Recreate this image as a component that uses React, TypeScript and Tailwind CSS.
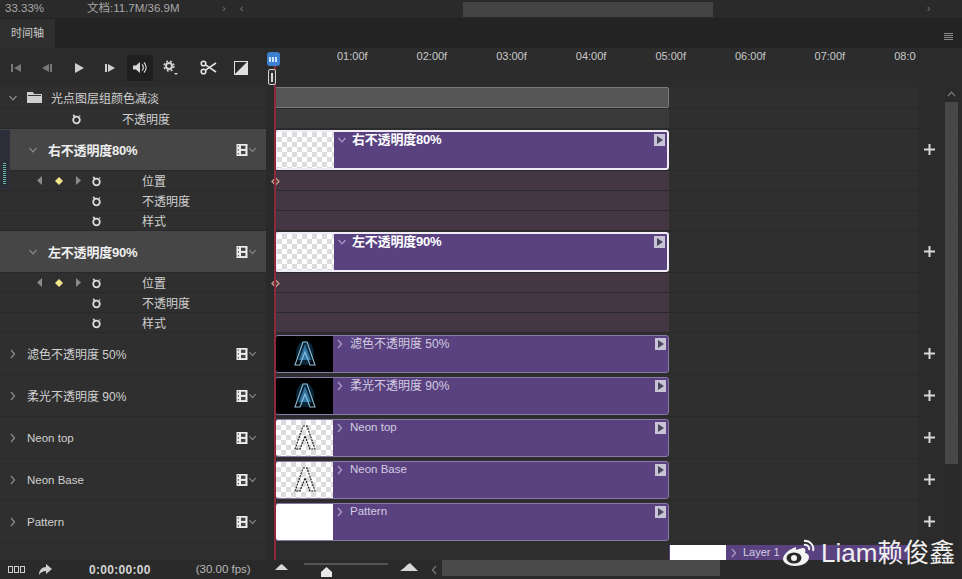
import React from "react";

const font = { fontFamily: '"Liberation Sans","Noto Sans CJK SC",sans-serif' };

function Stopwatch() {
  return (
    <svg width="11" height="12" viewBox="0 0 11 12" fill="none" stroke="#dcdcdc" strokeWidth="1.8">
      <circle cx="5.5" cy="7" r="3.3" />
      <path d="M2.200 2 3.800 3.600" />
      <path d="M8.300 3.400 9.200 2.500" strokeWidth="1.200" />
    </svg>
  );
}

function Film() {
  return (
    <svg width="12" height="13" viewBox="0 0 12 13">
      <rect x="0.500" y="0.500" width="11" height="12" fill="#ececec" />
      <rect x="1.800" y="2" width="1.200" height="1.200" fill="#444" />
      <rect x="1.800" y="5.800" width="1.200" height="1.200" fill="#444" />
      <rect x="1.800" y="9.600" width="1.200" height="1.200" fill="#444" />
      <rect x="5" y="2.200" width="4.400" height="3.200" fill="#444" />
      <rect x="5" y="7.400" width="4.400" height="3.200" fill="#444" />
    </svg>
  );
}

function ChevDown({ c = "#8a8a8a", s = 10 }: { c?: string; s?: number }) {
  return (
    <svg width={s} height={s} viewBox="0 0 10 10" fill="none" stroke={c} strokeWidth="1.2">
      <path d="M1.5 3 5 6.8 8.5 3" />
    </svg>
  );
}

function ChevRight({ c = "#8a8a8a" }: { c?: string }) {
  return (
    <svg width="8" height="10" viewBox="0 0 8 10" fill="none" stroke={c} strokeWidth="1.3">
      <path d="M2 1 5.500 5 2 9" />
    </svg>
  );
}

function Plus() {
  return (
    <svg width="11" height="11" viewBox="0 0 11 11">
      <path d="M4.500 0h2v4.500H11v2H6.500V11h-2V6.500H0v-2h4.500z" fill="#d8d8d8" />
    </svg>
  );
}

function EndMark() {
  return (
    <div className="absolute right-[2px] top-[2px] flex h-[12px] w-[11px] items-center justify-center bg-[#c9c3d6]">
      <svg width="8" height="8" viewBox="0 0 8 8"><path d="M1 0 7 4 1 8z" fill="#4b4660" /></svg>
    </div>
  );
}

function Checker() {
  return (
    <div className="h-full w-[57px] shrink-0 bg-[repeating-conic-gradient(#dcdcdc_0_25%,#ffffff_0_50%)] bg-[length:10px_10px]" />
  );
}

function NeonA({ blue }: { blue?: boolean }) {
  return (
    <svg width="24" height="28" viewBox="0 0 24 28" fill="none">
      {blue && <ellipse cx="12" cy="13" rx="9" ry="12" fill="#154a70" opacity="0.5" />}
      {blue && <path d="M12 4 18 20H6z" fill="#3f8fc6" opacity="0.75" />}
      <path d="M10 2h4l8 23h-5l-5-13-5 13H2z" stroke={blue ? "#8fbfd8" : "#111"} strokeWidth="1.100" strokeDasharray={blue ? undefined : "2 1"} />
    </svg>
  );
}

function Clip({ name, thumb, bold, latin, h = 38 }: { name: string; thumb: React.ReactNode; bold?: boolean; latin?: boolean; h?: number }) {
  const text = bold
    ? "ml-[5px] text-[13px] font-bold tracking-[-0.2px] text-white"
    : latin
      ? "ml-[6px] text-[11.5px] text-[#d4cde2]"
      : "ml-[6px] text-[12px] text-[#d4cde2]";
  return (
    <div
      className={`relative flex w-[394px] overflow-hidden rounded-[3px] bg-[#59427f] ${bold ? "border-2 border-[#f1ecf8]" : "border border-[#8a78a8]"}`}
      style={{ height: h }}
    >
      {thumb}
      <div className="flex h-[16px] items-center pl-[3px]">
        {bold ? <ChevDown c="#a99cc4" /> : <ChevRight c="#a99cc4" />}
        <span className={text}>{name}</span>
      </div>
      <EndMark />
    </div>
  );
}

function FilmChev() {
  return (
    <div className="absolute right-[9px] top-1/2 flex -translate-y-1/2 items-center">
      <Film />
      <ChevDown s={9} />
    </div>
  );
}

function Row({ left, track, h, plus, leftBg = "bg-[#2f2f2f]" }: { left: React.ReactNode; track: React.ReactNode; h: number; plus?: boolean; leftBg?: string }) {
  return (
    <div className="flex shrink-0 border-b border-[#292929]" style={{ height: h }}>
      <div className={`relative flex w-[266px] shrink-0 items-center ${leftBg}`}>{left}</div>
      <div className="w-[9px] shrink-0 bg-[#2a2a2a]" />
      <div className="flex w-[643px] shrink-0 items-center bg-[#2f2f2f]">{track}</div>
      <div className="flex w-[22px] shrink-0 items-center justify-center pl-[1px]">{plus && <Plus />}</div>
    </div>
  );
}

function Expanded({ name }: { name: string }) {
  return (
    <Row
      h={42}
      plus
      leftBg="bg-[#464646]"
      left={
        <>
          <div className="ml-[28px] mr-[10px]"><ChevDown /></div>
          <span className="pt-[2px] text-[13px] font-bold tracking-[-0.2px] text-[#eeeeee]">{name}</span>
          <FilmChev />
        </>
      }
      track={<Clip name={name} bold h={40} thumb={<Checker />} />}
    />
  );
}

function Prop({ name, keyed }: { name: string; keyed?: boolean }) {
  return (
    <Row
      h={20}
      left={
        <>
          <div className="flex w-[102px] items-center justify-end">
            {keyed && (
              <>
                <svg width="6" height="9" viewBox="0 0 6 9" className="mr-[12px]"><path d="M5 0v9L0 4.500z" fill="#8a8a8a" /></svg>
                <svg width="8" height="8" viewBox="0 0 8 8" className="mr-[12px]"><path d="M4 0 8 4 4 8 0 4z" fill="#f1e68c" /></svg>
                <svg width="6" height="9" viewBox="0 0 6 9" className="mr-[10px]"><path d="M1 0v9l5-4.500z" fill="#8a8a8a" /></svg>
              </>
            )}
            <div className="flex h-[14px] w-[11px] items-center"><Stopwatch /></div>
          </div>
          <span className="ml-[40px] pt-[2px] text-[12px] text-[#d0d0d0]">{name}</span>
        </>
      }
      track={
        <div className="relative h-full w-[394px] bg-[#453644]">
          {keyed && (
            <svg width="9" height="9" viewBox="0 0 9 9" className="absolute left-[-4px] top-[6px]">
              <path d="M4.500 1 8 4.500 4.500 8 1 4.500z" fill="#4a3a44" stroke="#c8988a" strokeWidth="1.400" />
            </svg>
          )}
        </div>
      }
    />
  );
}

function Layer({ name, thumb, latin }: { name: string; thumb: React.ReactNode; latin?: boolean }) {
  return (
    <Row
      h={42}
      plus
      left={
        <>
          <div className="ml-[9px] mr-[10px]"><ChevRight /></div>
          <span className={latin ? "pt-[2px] text-[11.5px] text-[#cfcfcf]" : "pt-[2px] text-[12px] text-[#cfcfcf]"}>{name}</span>
          <FilmChev />
        </>
      }
      track={<Clip name={name} latin={latin} thumb={thumb} />}
    />
  );
}

function NeonThumb({ blue }: { blue?: boolean }) {
  return (
    <div className="flex h-full w-[57px] shrink-0 items-center justify-center bg-black">
      <NeonA blue={blue} />
    </div>
  );
}

function CheckThumb() {
  return (
    <div className="flex h-full w-[57px] shrink-0 items-center justify-center bg-[repeating-conic-gradient(#dcdcdc_0_25%,#ffffff_0_50%)] bg-[length:10px_10px]">
      <NeonA />
    </div>
  );
}

function Tool({ children, active }: { children: React.ReactNode; active?: boolean }) {
  return (
    <div className={`flex h-[26px] w-[26px] items-center justify-center ${active ? "bg-[#1f1f1f]" : ""}`}>{children}</div>
  );
}

function Toolbar() {
  return (
    <div className="flex w-[266px] shrink-0 items-center pl-[3px]">
      <div className="flex items-center gap-[5px]">
        <Tool><svg width="12" height="10" viewBox="0 0 12 10"><path d="M1 1h2v8H1zM11 1v8L4 5z" fill="#777" /></svg></Tool>
        <Tool><svg width="12" height="10" viewBox="0 0 12 10"><path d="M8 1v8L1 5zM9 1h2v8H9z" fill="#777" /></svg></Tool>
        <div className="ml-[1px]"><Tool><svg width="10" height="10" viewBox="0 0 10 10"><path d="M1 0 10 5 1 10z" fill="#cfcfcf" /></svg></Tool></div>
        <Tool><svg width="12" height="10" viewBox="0 0 12 10"><path d="M1 1h2v8H1zM4 1l7 4-7 4z" fill="#cfcfcf" /></svg></Tool>
        <div className="-ml-[1px]"><Tool active>
          <svg width="16" height="13" viewBox="0 0 16 13" fill="none">
            <path d="M1 4.500h3L8 1v11L4 8.500H1z" fill="#d6d6d6" />
            <path d="M10 3.500a4 4 0 0 1 0 6M12 1.500a7 7 0 0 1 0 10" stroke="#d6d6d6" strokeWidth="1.200" />
          </svg>
        </Tool></div>
        <Tool>
          <svg width="16" height="16" viewBox="0 0 16 16" fill="none">
            <circle cx="6" cy="6" r="3" stroke="#d6d6d6" strokeWidth="2" />
            <circle cx="6" cy="6" r="5" stroke="#d6d6d6" strokeWidth="1.400" strokeDasharray="2 2" />
            <path d="M11 13h4l-2 2z" fill="#d6d6d6" />
          </svg>
        </Tool>
      </div>
      <div className="ml-[11px] flex items-center gap-[7px]">
        <Tool>
          <svg width="17" height="15" viewBox="0 0 17 15" fill="none" stroke="#e2e2e2" strokeWidth="1.600">
            <circle cx="3.500" cy="3.500" r="2.300" />
            <circle cx="3.500" cy="11.500" r="2.300" />
            <path d="M5.500 4.800 16 12M5.500 10.200 16 3" />
          </svg>
        </Tool>
        <Tool>
          <svg width="14" height="14" viewBox="0 0 14 14">
            <rect x="0.500" y="0.500" width="13" height="13" fill="#2b2b2b" stroke="#e0e0e0" />
            <path d="M13 1v12H1z" fill="#e0e0e0" />
          </svg>
        </Tool>
      </div>
    </div>
  );
}

function Ruler() {
  const marks = ["01:00f", "02:00f", "03:00f", "04:00f", "05:00f", "06:00f", "07:00f", "08:00f"];
  return (
    <div className="flex h-[39px] shrink-0 bg-[#2b2b2b]">
      <Toolbar />
      <div className="relative ml-[9px] w-[641px] overflow-hidden bg-[#2c2c2c]">
        <div className="flex pl-[62px] pt-[2px]">
          {marks.map((m) => (
            <span key={m} className="w-[79.6px] shrink-0 text-[11px] leading-[13px] text-[#c9c9c9]">{m}</span>
          ))}
        </div>
      </div>
    </div>
  );
}

function Footer() {
  return (
    <div className="flex h-[19px] shrink-0 items-center bg-[#2a2a2a]">
      <div className="flex w-[266px] shrink-0 items-center">
        <div className="ml-[8px] flex gap-[1px]">
          <span className="h-[7px] w-[5px] border border-[#cfcfcf]" />
          <span className="h-[7px] w-[5px] border border-[#cfcfcf]" />
          <span className="h-[7px] w-[5px] border border-[#cfcfcf]" />
        </div>
        <svg width="14" height="12" viewBox="0 0 14 12" className="ml-[13px]"><path d="M8 0l6 5-6 5V7C5 7 3 8 1 11 1 6 4 3 8 3z" fill="#cfcfcf" /></svg>
        <span className="ml-[37px] text-[12px] font-bold tracking-[0.3px] text-[#d4d4d4]">0:00:00:00</span>
        <span className="ml-[45px] text-[11.5px] text-[#b8b8b8]">(30.00 fps)</span>
      </div>
      <svg width="13" height="8" viewBox="0 0 13 8" className="mb-[6px] ml-[9px]"><path d="M0 7 4 3 6.500 1 9 3 13 7z" fill="#d8d8d8" /></svg>
      <div className="relative mb-[11px] ml-[16px] h-[2px] w-[84px] bg-[#555]">
        <svg width="11" height="10" viewBox="0 0 11 10" className="absolute left-[17px] top-[4px]"><path d="M5.500 0 11 5v5H0V5z" fill="#e8e8e8" /></svg>
      </div>
      <svg width="18" height="10" viewBox="0 0 18 10" className="mb-[6px] ml-[12px]"><path d="M0 9 4 6 7 3l3-2 3 3 5 5z" fill="#d8d8d8" /></svg>
      <div className="ml-[13px]"><ChevLeftSmall /></div>
      <div className="ml-[4px] h-full flex-1 bg-[#2a2a2a]">
        <div className="h-[16px] w-[278px] bg-[#4a4a4a]" />
      </div>
    </div>
  );
}

function ChevLeftSmall() {
  return (
    <svg width="7" height="10" viewBox="0 0 7 10" fill="none" stroke="#777" strokeWidth="1.200"><path d="M5 1 1.500 5 5 9" /></svg>
  );
}

function Watermark() {
  return (
    <div className="absolute left-[782px] top-[539px] flex items-center">
      <svg width="34" height="28" viewBox="0 0 34 28" fill="none">
        <path d="M14 8C7 10 1 16 1 20c0 4 6 7 12 7 8 0 14-4 14-9 0-3-3-4-4-4 1-3 0-5-2-5-2 0-4 1-7 2z" fill="#f4f4f4" />
        <ellipse cx="12" cy="19" rx="7.500" ry="5.500" fill="#2a2a2a" />
        <circle cx="12" cy="19" r="3" fill="#f4f4f4" />
        <path d="M22 6a4 4 0 0 1 5 5M22 2a8 8 0 0 1 9 10" stroke="#f4f4f4" strokeWidth="2" />
      </svg>
      <span className="ml-[5px] text-[26px] leading-[28px] text-[#f0f0f0]">Liam赖俊鑫</span>
    </div>
  );
}

export default function App() {
  return (
    <div className="relative flex h-[579px] w-[962px] flex-col overflow-hidden bg-[#2b2b2b]" style={font}>
      <div className="flex h-[18px] shrink-0 items-center bg-[#2a2a2a] text-[11.5px] text-[#a8a8a8]">
        <span className="ml-[5px] w-[82px] shrink-0">33.33%</span>
        <span className="w-[135px] shrink-0">文档:11.7M/36.9M</span>
        <span className="text-[#777]">›</span>
        <span className="ml-[14px] text-[#777]">‹</span>
        <div className="ml-[219px] h-[15px] w-[250px] bg-[#444]" />
        <span className="ml-[214px] text-[#777]">›</span>
      </div>
      <div className="flex h-[30px] shrink-0 items-end bg-[#232323]">
        <div className="flex h-[29px] w-[55px] items-center justify-center bg-[#2f2f2f] text-[11px] text-[#c9c9c9]">时间轴</div>
        <div className="mb-[8px] ml-auto mr-[9px] flex flex-col gap-[1px]">
          <span className="h-[1px] w-[9px] bg-[#888]" />
          <span className="h-[1px] w-[9px] bg-[#888]" />
          <span className="h-[1px] w-[9px] bg-[#888]" />
          <span className="h-[1px] w-[9px] bg-[#888]" />
        </div>
      </div>
      <Ruler />
      <Row
        h={22}
        left={
          <>
            <div className="ml-[8px] mr-[9px]"><ChevDown /></div>
            <svg width="15" height="11" viewBox="0 0 15 11"><path d="M0 0h6l1 2h8v9H0z" fill="#cfcfcf" /><path d="M1 3.500h13" stroke="#333" /></svg>
            <span className="ml-[9px] pt-[2px] text-[12px] text-[#d0d0d0]">光点图层组颜色减淡</span>
          </>
        }
        track={<div className="h-[21px] w-[394px] rounded-[2px] border border-[#7a7a7a] bg-[#555555]" />}
      />
      <Row
        h={20}
        left={
          <>
            <div className="ml-[71px]"><Stopwatch /></div>
            <span className="ml-[40px] pt-[2px] text-[12px] text-[#d0d0d0]">不透明度</span>
          </>
        }
        track={<div className="h-full w-[394px] bg-[#3a3a3a]" />}
      />
      <Expanded name="右不透明度80%" />
      <Prop name="位置" keyed />
      <Prop name="不透明度" />
      <Prop name="样式" />
      <Expanded name="左不透明度90%" />
      <Prop name="位置" keyed />
      <Prop name="不透明度" />
      <Prop name="样式" />
      <Layer name="滤色不透明度 50%" thumb={<NeonThumb blue />} />
      <Layer name="柔光不透明度 90%" thumb={<NeonThumb blue />} />
      <Layer name="Neon top" latin thumb={<CheckThumb />} />
      <Layer name="Neon Base" latin thumb={<CheckThumb />} />
      <Layer name="Pattern" latin thumb={<div className="h-full w-[57px] shrink-0 bg-white" />} />
      <div className="flex h-[17px] shrink-0">
        <div className="w-[266px] shrink-0 bg-[#2f2f2f]" />
        <div className="w-[9px] shrink-0 bg-[#2a2a2a]" />
        <div className="relative w-[643px] shrink-0 bg-[#2f2f2f]">
          <div className="absolute left-[394px] top-[2px] flex h-[15px] w-[240px] bg-[#59427f]">
            <div className="ml-[1px] h-full w-[56px] bg-white" />
            <div className="ml-[4px] flex items-center">
              <ChevRight c="#a99cc4" />
              <span className="ml-[5px] text-[11px] text-[#d4cde2]">Layer 1</span>
            </div>
          </div>
        </div>
      </div>
      <Footer />

      {/* docked side tab at the panel's left edge */}
      <div className="absolute left-0 top-[130px] flex h-[60px] w-[10px] items-end bg-[#2c2f3a] pb-[5px] pl-[3px]">
        <div className="h-[22px] w-[3px] bg-[repeating-linear-gradient(#6fb5a8_0_1px,#1f2a2a_1px_2px)]" />
      </div>

      {/* playhead */}
      <div className="absolute left-[274px] top-[62px] h-[498px] w-[2px] bg-[#8a2a3c]" />
      <div className="absolute left-[267px] top-[52px] flex h-[14px] w-[13px] items-center justify-center rounded-[3px] bg-[#3a7fd0]">
        <span className="h-[5px] w-[9px] bg-[repeating-linear-gradient(90deg,#cfe3f8_0_2px,#3a7fd0_2px_3px)]" />
      </div>
      <div className="absolute left-[268px] top-[69px] flex h-[16px] w-[8px] items-center justify-center rounded-[2px] border border-[#d0d0d0] bg-[#333]">
        <span className="h-[9px] w-[2px] bg-[#d8d8d8]" />
      </div>

      {/* scrollbar */}
      <div className="absolute left-[945px] top-[88px] flex h-[472px] w-[13px] flex-col bg-[#2a2a2a]">
        <svg width="13" height="14" viewBox="0 0 13 14" fill="none" stroke="#777" strokeWidth="1.200"><path d="M3 8 6.500 4 10 8" /></svg>
        <div className="h-[362px] w-full bg-[#474747]" />
      </div>
      <Watermark />
    </div>
  );
}
